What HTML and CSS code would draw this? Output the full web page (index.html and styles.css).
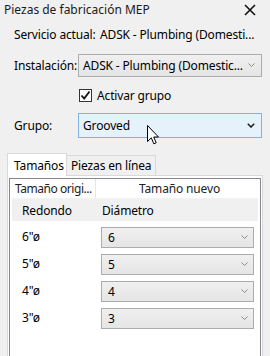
FILE: index.html
```html
<!DOCTYPE html>
<html>
<head>
<meta charset="utf-8">
<link rel="stylesheet" href="styles.css">
</head>
<body>
<div class="window">
  <div class="titlebar">
    <span class="title">Piezas de fabricación MEP</span>
    <svg class="close" width="12" height="12" viewBox="0 0 12 12"><path d="M1 1 L11 11 M11 1 L1 11" stroke="#111" stroke-width="1.6"/></svg>
  </div>
  <div class="form">
    <div class="row service">
      <span class="label">Servicio actual:</span>
      <span class="value">ADSK - Plumbing (Domesti...</span>
    </div>
    <div class="row inst">
      <span class="label">Instalación:</span>
      <div class="combo plain">
        <span>ADSK - Plumbing (Domestic...</span>
        <svg class="chev" width="7" height="5" viewBox="0 0 7 5"><path d="M0.5 0.5 L3.5 3.5 L6.5 0.5" fill="none" stroke="#8a8a8a" stroke-width="1"/></svg>
      </div>
    </div>
    <div class="row check">
      <span class="box"><svg width="11" height="11" viewBox="0 0 11 11"><path d="M1.5 5.5 L4.2 8.5 L9.5 1.5" fill="none" stroke="#111" stroke-width="1.8"/></svg></span>
      <span>Activar grupo</span>
    </div>
    <div class="row group">
      <span class="label">Grupo:</span>
      <div class="combo hover">
        <span>Grooved</span>
        <svg class="chev" width="8" height="5" viewBox="0 0 8 5"><path d="M0.8 0.8 L4 4 L7.2 0.8" fill="none" stroke="#222" stroke-width="1.6"/></svg>
      </div>
    </div>
  </div>
  <div class="tabs">
    <div class="tab active">Tamaños</div>
    <div class="tab">Piezas en línea</div>
  </div>
  <div class="panel">
    <div class="grid">
      <div class="ghead">
        <div class="c1">Tamaño origi...</div>
        <div class="c2">Tamaño nuevo</div>
      </div>
      <div class="gsub">
        <div class="c1">Redondo</div>
        <div class="c2">Diámetro</div>
      </div>
      <div class="grow">
        <div class="c1">6"ø</div>
        <div class="combo small"><span>6</span><svg class="chev" width="7" height="5" viewBox="0 0 7 5"><path d="M0.5 0.5 L3.5 3.5 L6.5 0.5" fill="none" stroke="#8a8a8a" stroke-width="1"/></svg></div>
      </div>
      <div class="grow">
        <div class="c1">5"ø</div>
        <div class="combo small"><span>5</span><svg class="chev" width="7" height="5" viewBox="0 0 7 5"><path d="M0.5 0.5 L3.5 3.5 L6.5 0.5" fill="none" stroke="#8a8a8a" stroke-width="1"/></svg></div>
      </div>
      <div class="grow">
        <div class="c1">4"ø</div>
        <div class="combo small"><span>4</span><svg class="chev" width="7" height="5" viewBox="0 0 7 5"><path d="M0.5 0.5 L3.5 3.5 L6.5 0.5" fill="none" stroke="#8a8a8a" stroke-width="1"/></svg></div>
      </div>
      <div class="grow">
        <div class="c1">3"ø</div>
        <div class="combo small"><span>3</span><svg class="chev" width="7" height="5" viewBox="0 0 7 5"><path d="M0.5 0.5 L3.5 3.5 L6.5 0.5" fill="none" stroke="#8a8a8a" stroke-width="1"/></svg></div>
      </div>
    </div>
  </div>
  <svg class="cursor" width="13" height="21" viewBox="0 0 13 21"><path d="M0.5 0.5 L0.5 16.5 L4.3 12.8 L6.8 18.8 L9.2 17.8 L6.7 12 L11.5 12 Z" fill="#fff" stroke="#000" stroke-width="1"/></svg>
</div>
</body>
</html>
```

FILE: styles.css
```css
html, body {
  margin: 0;
  padding: 0;
}
body {
  background: #f0f0f0;
  font-family: "Noto Sans", "Liberation Sans", sans-serif;
  font-size: 12px;
  letter-spacing: -0.15px;
  color: #000;
  white-space: nowrap;
}
.window {
  position: relative;
  width: 270px;
  height: 356px;
  overflow: hidden;
  background: #f0f0f0;
}
.titlebar {
  height: 22px;
  display: flex;
  align-items: center;
  justify-content: space-between;
  padding: 0 14px 0 4px;
  box-sizing: border-box;
}
.title {
  font-size: 12px;
  letter-spacing: 0;
  color: #1a1a1a;
  margin-top: -3px;
}
.close {
  margin-top: -2px;
}
.form {
  padding: 0 8px 0 14px;
}
.row {
  display: flex;
  align-items: center;
}
.label {
  width: 64px;
  flex: none;
}
.service {
  height: 24px;
}
.service .label {
  width: 86px;
}
.inst {
  margin-top: 8px;
}
.combo {
  box-sizing: border-box;
  display: flex;
  align-items: center;
  justify-content: space-between;
  border: 1px solid #acacac;
  background: linear-gradient(#f0f0f0, #e5e5e5);
  padding: 0 6px 0 4px;
}
.plain {
  width: 184px;
  height: 23px;
}
.hover {
  width: 184px;
  height: 25px;
  background: #e5f1fb;
  border-color: #7eb4ea;
}
.check {
  margin-top: 12px;
  padding-left: 65px;
  height: 13px;
}
.box {
  width: 13px;
  height: 13px;
  box-sizing: border-box;
  border: 1px solid #333;
  background: #fff;
  display: flex;
  align-items: center;
  justify-content: center;
  margin-right: 5px;
}
.group {
  margin-top: 11px;
}
.tabs {
  display: flex;
  align-items: flex-end;
  padding-left: 7px;
  margin-top: 15px;
  height: 22px;
  position: relative;
  z-index: 1;
}
.tab {
  box-sizing: border-box;
  height: 20px;
  border: 1px solid #d9d9d9;
  border-bottom: none;
  padding: 0 4px;
  display: flex;
  align-items: center;
  background: #f0f0f0;
}
.tab.active {
  height: 23px;
  margin-bottom: -1px;
  background: #fff;
  padding: 0 6px;
  width: 60px;
}
.tab + .tab {
  border-left: none;
}
.panel {
  box-sizing: border-box;
  margin-left: 7px;
  width: 256px;
  height: 200px;
  border: 1px solid #d9d9d9;
  background: #fff;
  padding: 2px 1px 0 1px;
}
.grid {
  box-sizing: border-box;
  height: 220px;
  border: 1px solid #828790;
  background: #fff;
  padding: 0 2px;
}
.ghead {
  display: flex;
  height: 19px;
  align-items: center;
  border-bottom: 1px solid #f3f3f3;
}
.ghead .c1 {
  width: 84px;
  flex: none;
  padding-left: 3px;
  box-sizing: border-box;
  border-right: 1px solid #e5e5e5;
  height: 19px;
  line-height: 19px;
  color: #222;
  letter-spacing: -0.45px;
  overflow: hidden;
}
.ghead .c2 {
  flex: 1;
  text-align: center;
  padding-left: 5px;
  color: #222;
}
.gsub {
  display: flex;
  height: 22px;
  align-items: center;
  background: #f0f0f0;
}
.gsub .c1 {
  width: 90px;
  flex: none;
  padding-left: 10px;
  box-sizing: border-box;
}
.grow {
  display: flex;
  align-items: center;
  margin-top: 6px;
  height: 21px;
}
.grow .c1 {
  width: 89px;
  flex: none;
  padding-left: 10px;
  box-sizing: border-box;
  margin-top: -2px;
}
.small {
  width: 153px;
  height: 21px;
  padding: 0 5px 0 6px;
}
.chev {
  display: block;
}
.cursor {
  position: absolute;
  left: 147px;
  top: 125px;
}
```
